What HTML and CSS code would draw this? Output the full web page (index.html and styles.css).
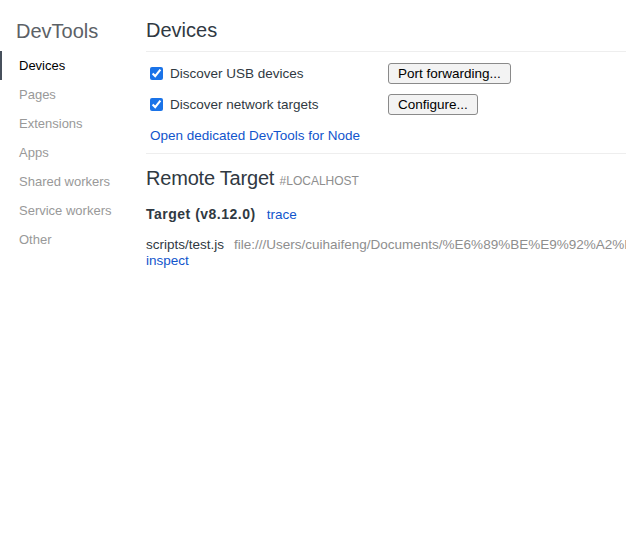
FILE: index.html
```html
<!DOCTYPE html>
<html>
<head>
<meta charset="utf-8">
<link rel="stylesheet" href="styles.css">
</head>
<body>
<div class="page">
  <nav class="sidebar">
    <h1 class="brand">DevTools</h1>
    <ul class="nav">
      <li class="nav-item active">Devices</li>
      <li class="nav-item">Pages</li>
      <li class="nav-item">Extensions</li>
      <li class="nav-item">Apps</li>
      <li class="nav-item">Shared workers</li>
      <li class="nav-item">Service workers</li>
      <li class="nav-item">Other</li>
    </ul>
  </nav>
  <main class="content">
    <h2 class="title">Devices</h2>
    <div class="section">
      <div class="opt-row">
        <label class="opt"><input type="checkbox" checked> Discover USB devices</label>
        <button class="btn">Port forwarding...</button>
      </div>
      <div class="opt-row">
        <label class="opt"><input type="checkbox" checked> Discover network targets</label>
        <button class="btn">Configure...</button>
      </div>
      <a class="link node-link">Open dedicated DevTools for Node</a>
    </div>
    <div class="remote">
      <h2 class="title remote-title">Remote Target <span class="host">#LOCALHOST</span></h2>
      <div class="target-head"><span class="target-name">Target (v8.12.0)</span><a class="link">trace</a></div>
      <div class="target-row">
        <span class="script">scripts/test.js</span><span class="url">file:///Users/cuihaifeng/Documents/%E6%89%BE%E9%92%A2%E7%BD%91/test.js</span>
      </div>
      <a class="link inspect">inspect</a>
    </div>
  </main>
</div>
</body>
</html>
```

FILE: styles.css
```css
html, body {
  margin: 0;
  padding: 0;
  background: #fff;
  overflow: hidden;
}
body {
  font-family: "Liberation Sans", Arial, sans-serif;
  font-size: 13.5px;
  color: #303942;
}
.page {
  display: flex;
  width: 626px;
  height: 551px;
  overflow: hidden;
}
.sidebar {
  width: 146px;
  flex: none;
}
.brand {
  margin: 0;
  padding: 19px 0 0 16px;
  font-size: 20px;
  font-weight: normal;
  color: #5c6166;
  line-height: 24px;
  height: 32px;
}
.nav {
  list-style: none;
  margin: 0;
  padding: 0;
}
.nav-item {
  height: 29px;
  line-height: 29px;
  color: #999;
  border-left: 2px solid transparent;
  padding-left: 17px;
  font-size: 13px;
}
.nav-item.active {
  color: #000;
  border-left-color: #47505c;
}
.content {
  flex: 1;
  min-width: 0;
  white-space: nowrap;
}
.title {
  margin: 0;
  font-size: 20px;
  font-weight: normal;
  color: #303942;
  line-height: 24px;
  padding-top: 18px;
  padding-bottom: 9px;
  border-bottom: 1px solid #eee;
}
.section {
  padding: 6px 0 7px 4px;
  border-bottom: 1px solid #eee;
}
.opt-row {
  display: flex;
  align-items: center;
  height: 31px;
}
.opt {
  display: flex;
  align-items: center;
  width: 238px;
}
.opt input {
  margin: 0 7px 0 0;
  width: 13px;
  height: 13px;
  accent-color: #1a73e8;
}
.btn {
  font-family: "Liberation Sans", Arial, sans-serif;
  font-size: 13.5px;
  color: #000;
  background: #f3f3f3;
  border: 1px solid #8a8a8a;
  border-radius: 3px;
  height: 21px;
  padding: 0 9px;
  line-height: 19px;
}
.link {
  color: #1155cc;
  text-decoration: none;
}
.node-link {
  display: block;
  line-height: 20px;
  padding-top: 6px;
}
.remote-title {
  border-bottom: none;
  padding-top: 12px;
  padding-bottom: 0;
  letter-spacing: -0.2px;
}
.host {
  font-size: 12px;
  color: #8e8e8e;
  margin-left: 0;
  letter-spacing: 0;
}
.target-head {
  margin-top: 11px;
  line-height: 20px;
}
.target-name {
  font-weight: bold;
  font-size: 14px;
  letter-spacing: 0.5px;
  margin-right: 11px;
}
.target-row {
  margin-top: 12px;
  line-height: 16px;
}
.script {
  margin-right: 10px;
}
.url {
  color: #8e8e8e;
}
.inspect {
  display: block;
  line-height: 16px;
}
```
